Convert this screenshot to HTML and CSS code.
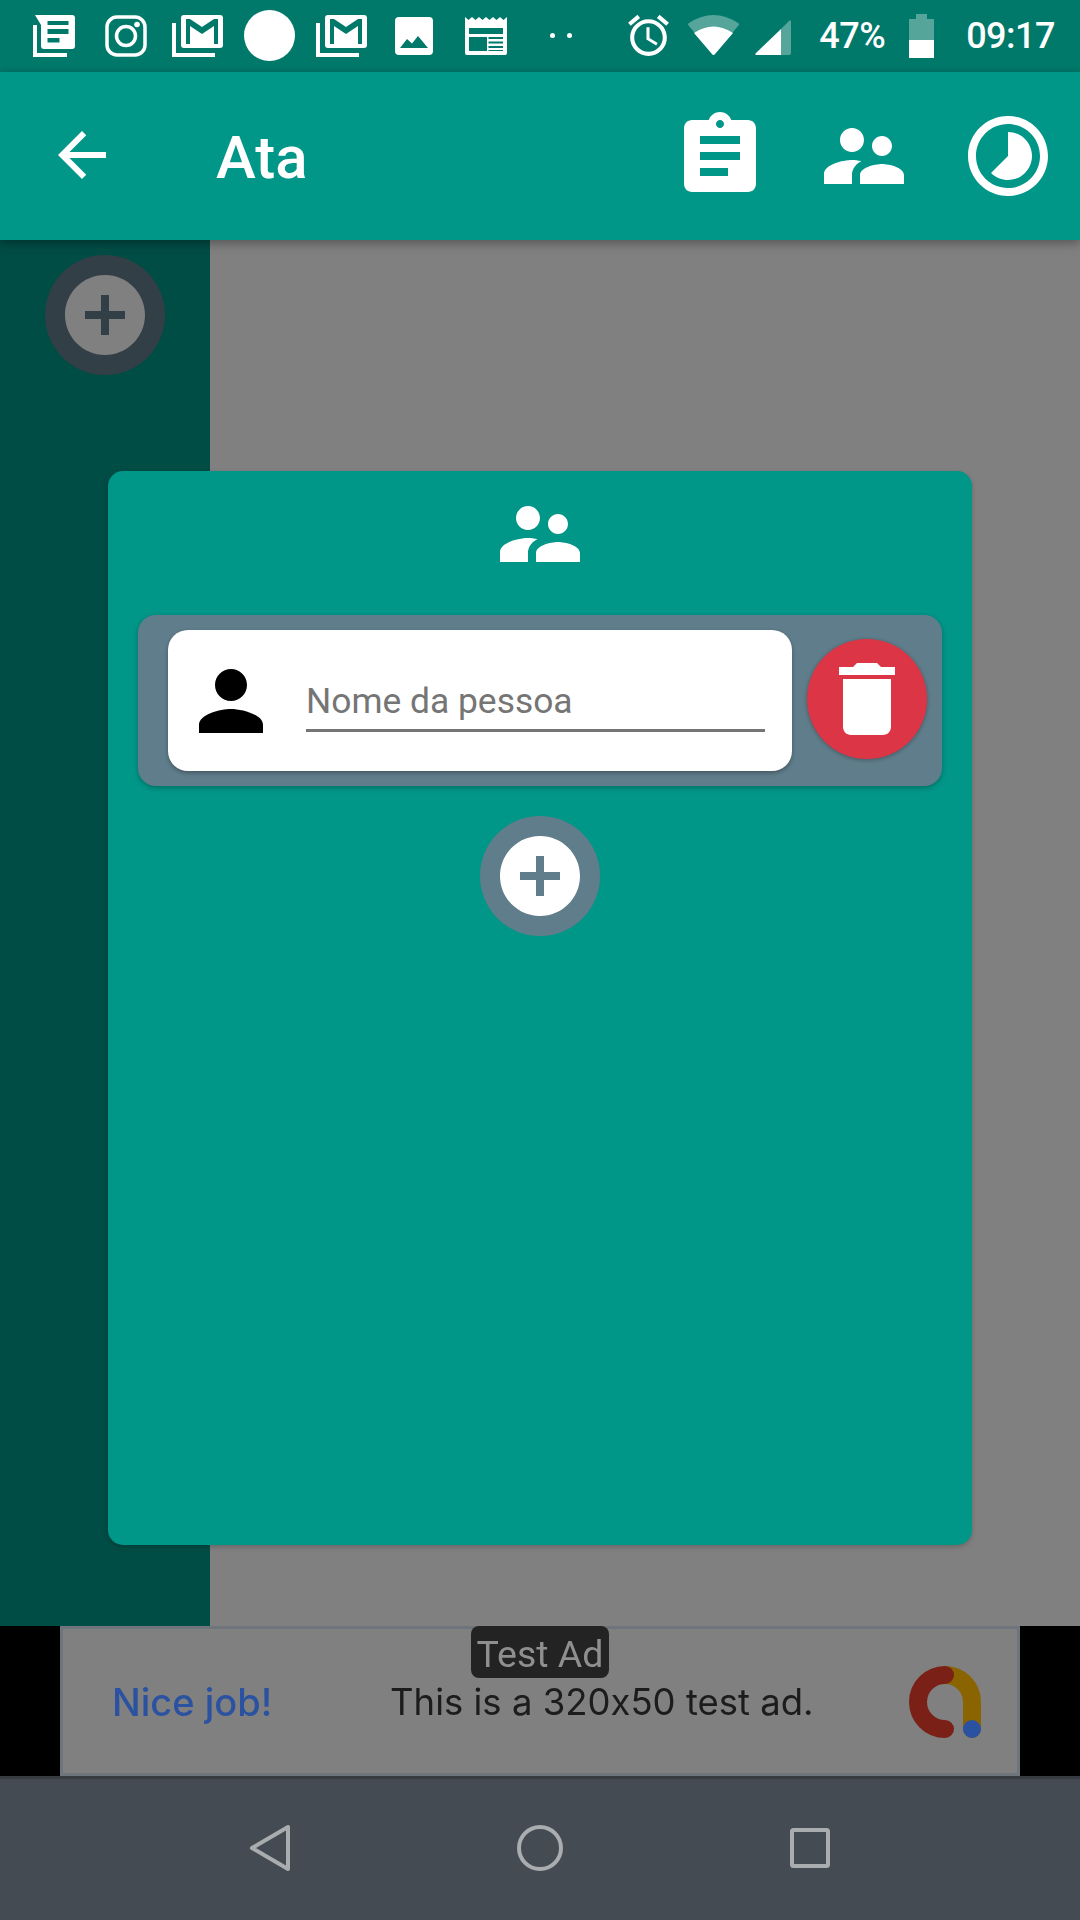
FILE: index.html
```html
<!DOCTYPE html>
<html lang="en">

<head>
    <meta charset="UTF-8">
    <meta name="viewport" content="width=device-width, initial-scale=1.0">
    <title>Ata</title>
    <link rel="stylesheet" href="styles.css">
</head>

<body>
    <div class="screen">
        <div class="status-bar">
            <div class="status-left">
                <!-- news -->
                <svg class="st-icon" viewBox="0 0 72 72">
                    <path fill="#fff" fill-rule="evenodd" d="M17 15H54a3 3 0 0 1 3 3V46a3 3 0 0 1-3 3H26a3 3 0 0 1-3-3V25ZM29.5 21v4h21v-4ZM29.5 29v5h21v-5ZM29.5 38v4.5h12V38Z" />
                    <path fill="none" stroke="#fff" stroke-width="4" d="M17 25V55H49" />
                </svg>
                <!-- instagram -->
                <svg class="st-icon" viewBox="0 0 72 72">
                    <rect x="17" y="17" width="38" height="38" rx="10" fill="none" stroke="#fff" stroke-width="3.5" />
                    <circle cx="36" cy="36" r="9.5" fill="none" stroke="#fff" stroke-width="3.5" />
                    <circle cx="47" cy="24.5" r="2.8" fill="#fff" />
                </svg>
                <!-- gmail -->
                <svg class="st-icon" viewBox="0 0 72 72">
                    <rect x="19" y="15" width="42" height="33" rx="3" fill="#fff" />
                    <path fill="#00796b" d="M24 19H28L40 27L52 19H56V44H52V26L40 34L28 26V44H24Z" />
                    <path fill="none" stroke="#fff" stroke-width="4" d="M12 23V55H53" />
                </svg>
                <svg class="st-icon" viewBox="0 0 72 72">
                    <circle cx="35.5" cy="35.5" r="25.5" fill="#fff" />
                </svg>
                <svg class="st-icon" viewBox="0 0 72 72">
                    <rect x="19" y="15" width="42" height="33" rx="3" fill="#fff" />
                    <path fill="#00796b" d="M24 19H28L40 27L52 19H56V44H52V26L40 34L28 26V44H24Z" />
                    <path fill="none" stroke="#fff" stroke-width="4" d="M12 23V55H53" />
                </svg>
                <!-- picture -->
                <svg class="st-icon" viewBox="0 0 72 72">
                    <rect x="17" y="17" width="38" height="38" rx="4" fill="#fff" />
                    <path fill="#00796b" d="M22 48L29 39L34 43.5L40 36L50 48Z" />
                </svg>
                <!-- newspaper -->
                <svg class="st-icon" viewBox="0 0 72 72">
                    <path fill="#fff" d="M15 17L18.5 20L22 17L25.500 20L29 17L32.500 20L36 17L39.500 20L43 17L46.500 20L50 17L53.500 20L57 17V53a2 2 0 0 1-2 2H17a2 2 0 0 1-2-2Z" />
                    <path fill="#00796b" d="M19 28H53V34H19ZM19 37H37V51H19ZM38.500 37H53V39H38.500ZM38.500 41.500H53V43.500H38.500ZM38.500 46H53V48H38.500ZM38.500 50H53V51H38.500Z" />
                </svg>
                <div class="st-dots"><span></span><span></span></div>
            </div>
            <div class="status-right">
                <svg class="st-alarm" viewBox="0 0 24 24">
                    <path fill="#fff" d="M22 5.720l-4.600-3.860-1.290 1.530 4.600 3.860L22 5.720zM7.880 3.390L6.600 1.860 2 5.710l1.290 1.530 4.590-3.850zM12.500 8H11v6l4.750 2.850.75-1.230-4-2.370V8zM12 4c-4.970 0-9 4.030-9 9s4.030 9 9 9 9-4.030 9-9-4.030-9-9-9zm0 16c-3.870 0-7-3.130-7-7s3.130-7 7-7 7 3.130 7 7-3.130 7-7 7z" />
                </svg>
                <svg class="st-wifi" viewBox="0 0 51 40">
                    <path fill="#55a59b" d="M1 11Q-1 9 1 8Q25.500-8 50 8Q52 9 50 11L27 39Q25.500 41 24 39Z" />
                    <path fill="#fff" d="M6 18Q25.500 5 45 18L27 39Q25.500 41 24 39Z" />
                </svg>
                <svg class="st-signal" viewBox="0 0 36 36">
                    <path fill="#55a59b" d="M26 10L34 2Q36 0 36 3V34Q36 36 34 36H26Z" />
                    <path fill="#fff" d="M26 10V36H2Q-1 36 1 34Z" />
                </svg>
                <span class="st-text st-percent">47%</span>
                <div class="st-battery">
                    <div class="battery-nub"></div>
                    <div class="battery-empty"></div>
                    <div class="battery-full"></div>
                </div>
                <span class="st-text st-time">09:17</span>
            </div>
        </div>

        <div class="app-bar">
            <svg class="back-icon" viewBox="0 0 24 24">
                <path fill="#fff" d="M20 11H7.830l5.590-5.590L12 4l-8 8 8 8 1.410-1.410L7.830 13H20v-2z" />
            </svg>
            <div class="app-title">Ata</div>
            <div class="app-actions">
                <svg class="icon-96" viewBox="0 0 24 24">
                    <path fill="#fff" d="M19 3h-4.180C14.400 1.840 13.300 1 12 1c-1.300 0-2.400.84-2.820 2H5c-1.100 0-2 .9-2 2v14c0 1.100.9 2 2 2h14c1.100 0 2-.9 2-2V5c0-1.100-.9-2-2-2zm-7 0c.55 0 1 .45 1 1s-.45 1-1 1-1-.45-1-1 .45-1 1-1zm2 14H7v-2h7v2zm3-4H7v-2h10v2zm0-4H7V7h10v2z" />
                </svg>
                <svg class="icon-96" viewBox="0 0 24 24">
                    <path fill="#fff" d="M16.500 12c1.380 0 2.490-1.120 2.490-2.500S17.880 7 16.500 7C15.120 7 14 8.120 14 9.500s1.120 2.500 2.500 2.500zM9 11c1.660 0 2.990-1.340 2.990-3S10.660 5 9 5C7.340 5 6 6.340 6 8s1.340 3 3 3zm7.500 3c-1.830 0-5.500.92-5.500 2.750V19h11v-2.250c0-1.830-3.670-2.750-5.500-2.750zM9 13c-2.330 0-7 1.170-7 3.500V19h7v-2.250c0-.85.33-2.340 2.370-3.470C10.500 13.100 9.660 13 9 13z" />
                </svg>
                <svg class="icon-96" viewBox="0 0 24 24">
                    <path fill="#fff" d="M16.240 7.760C15.070 6.590 13.540 6 12 6v6l-4.240 4.240c2.340 2.340 6.140 2.340 8.490 0 2.340-2.340 2.340-6.140-.01-8.480zM12 2C6.480 2 2 6.480 2 12s4.480 10 10 10 10-4.480 10-10S17.520 2 12 2zm0 18c-4.420 0-8-3.580-8-8s3.580-8 8-8 8 3.580 8 8-3.580 8-8 8z" />
                </svg>
            </div>
        </div>

        <div class="main">
            <div class="sidebar">
                <div class="add-btn add-btn-dim">
                    <svg class="icon-96" viewBox="0 0 24 24">
                        <path fill="#808080" d="M12 2C6.480 2 2 6.480 2 12s4.480 10 10 10 10-4.480 10-10S17.520 2 12 2zm5 11h-4v4h-2v-4H7v-2h4V7h2v4h4v2z" />
                    </svg>
                </div>
            </div>

            <div class="dialog">
                <svg class="icon-96" viewBox="0 0 24 24">
                    <path fill="#fff" d="M16.500 12c1.380 0 2.490-1.120 2.490-2.500S17.880 7 16.500 7C15.120 7 14 8.120 14 9.500s1.120 2.500 2.500 2.500zM9 11c1.660 0 2.990-1.340 2.990-3S10.660 5 9 5C7.340 5 6 6.340 6 8s1.340 3 3 3zm7.500 3c-1.830 0-5.500.92-5.500 2.750V19h11v-2.250c0-1.830-3.670-2.750-5.500-2.750zM9 13c-2.330 0-7 1.170-7 3.500V19h7v-2.250c0-.85.33-2.340 2.370-3.470C10.500 13.100 9.660 13 9 13z" />
                </svg>
                <div class="person-row">
                    <div class="person-field">
                        <svg class="icon-96" viewBox="0 0 24 24">
                            <path fill="#000" d="M12 12c2.210 0 4-1.790 4-4s-1.790-4-4-4-4 1.790-4 4 1.790 4 4 4zm0 2c-2.670 0-8 1.340-8 4v2h16v-2c0-2.660-5.330-4-8-4z" />
                        </svg>
                        <div class="person-input">Nome da pessoa</div>
                    </div>
                    <div class="delete-btn">
                        <svg class="icon-96" viewBox="0 0 24 24">
                            <path fill="#fff" d="M6 19c0 1.100.9 2 2 2h8c1.100 0 2-.9 2-2V7H6v12zM19 4h-3.500l-1-1h-5l-1 1H5v2h14V4z" />
                        </svg>
                    </div>
                </div>
                <div class="add-btn">
                    <svg class="icon-96" viewBox="0 0 24 24">
                        <path fill="#fff" d="M12 2C6.480 2 2 6.480 2 12s4.480 10 10 10 10-4.480 10-10S17.520 2 12 2zm5 11h-4v4h-2v-4H7v-2h4V7h2v4h4v2z" />
                    </svg>
                </div>
            </div>
        </div>

        <div class="ad-band">
            <div class="ad">
                <div class="ad-badge">Test Ad</div>
                <div class="ad-title">Nice job!</div>
                <div class="ad-text">This is a 320x50 test ad.</div>
                <svg class="ad-logo" viewBox="0 0 72 72">
                    <path fill="none" stroke="#8a6400" stroke-width="18" stroke-linecap="round" d="M36 9A27 27 0 0 1 63 36V63" />
                    <path fill="none" stroke="#7a2016" stroke-width="18" stroke-linecap="round" d="M36 9A27 27 0 0 0 36 63" />
                    <circle cx="63" cy="63" r="9" fill="#2a52a0" />
                </svg>
            </div>
        </div>

        <div class="nav-bar">
            <svg class="nav-icon" viewBox="0 0 48 48">
                <path fill="none" stroke="#a9adb0" stroke-width="4" stroke-linejoin="round" d="M6 24L42 3V45Z" />
            </svg>
            <svg class="nav-icon" viewBox="0 0 48 48">
                <circle cx="24" cy="24" r="21" fill="none" stroke="#a9adb0" stroke-width="4" />
            </svg>
            <svg class="nav-icon" viewBox="0 0 48 48">
                <rect x="6" y="6" width="36" height="36" rx="1.500" fill="none" stroke="#a9adb0" stroke-width="4" />
            </svg>
        </div>
    </div>
</body>

</html>
```

FILE: styles.css
```css
* {
    box-sizing: border-box;
}

html,
body {
    margin: 0;
    padding: 0;
}

body {
    font-family: Roboto, "Liberation Sans", sans-serif;
}

svg {
    display: block;
    flex: none;
}

.screen {
    display: flex;
    flex-direction: column;
    width: 1080px;
    height: 1920px;
    overflow: hidden;
    background: #808080;
}

/* status bar */

.status-bar {
    display: flex;
    justify-content: space-between;
    height: 72px;
    background: #00796b;
    color: #fff;
}

.status-left {
    display: flex;
    padding-left: 18px;
}

.st-icon {
    width: 72px;
    height: 72px;
}

.st-dots {
    display: flex;
    gap: 12px;
    margin: 33px 0 0 28px;
}

.st-dots span {
    width: 5px;
    height: 5px;
    border-radius: 50%;
    background: #fff;
}

.status-right {
    display: flex;
    align-items: flex-start;
    padding-right: 25px;
}

.st-alarm {
    width: 49px;
    height: 49px;
    margin-top: 11px;
}

.st-wifi {
    width: 51px;
    height: 40px;
    margin: 15px 0 0 15px;
}

.st-signal {
    width: 36px;
    height: 36px;
    margin: 19px 0 0 16px;
}

.st-text {
    font-size: 36px;
    font-weight: 500;
    line-height: 72px;
    letter-spacing: -0.5px;
}

.st-percent {
    margin-left: 28px;
}

.st-battery {
    width: 25px;
    margin: 14px 0 0 24px;
}

.battery-nub {
    width: 11px;
    height: 5px;
    margin: 0 auto;
    background: #55a59b;
}

.battery-empty {
    height: 21px;
    background: #55a59b;
}

.battery-full {
    height: 18px;
    background: #fff;
}

.st-time {
    margin-left: 32px;
}

/* app bar */

.app-bar {
    position: relative;
    z-index: 2;
    display: flex;
    align-items: center;
    height: 168px;
    padding-left: 46px;
    background: #009688;
    box-shadow: 0 3px 10px rgba(0, 0, 0, 0.35);
}

.back-icon {
    width: 72px;
    height: 72px;
    margin-top: -2px;
}

.app-title {
    margin: 2px 0 0 98px;
    font-size: 60px;
    font-weight: 500;
    color: #fff;
}

.app-actions {
    display: flex;
    gap: 48px;
    margin-left: auto;
    padding-right: 24px;
}

.icon-96 {
    width: 96px;
    height: 96px;
}

/* main area */

.main {
    position: relative;
    flex: 1;
    background: #808080;
}

.sidebar {
    width: 210px;
    height: 100%;
    padding: 15px 0 0 45px;
    background: #004d45;
}

.add-btn {
    display: flex;
    justify-content: center;
    align-items: center;
    width: 120px;
    height: 120px;
    border-radius: 50%;
    background: #607d8b;
}

.add-btn-dim {
    background: #323f47;
}

.dialog {
    position: absolute;
    top: 231px;
    left: 108px;
    display: flex;
    flex-direction: column;
    align-items: center;
    width: 864px;
    height: 1074px;
    padding: 15px 30px;
    border-radius: 15px;
    background: #009688;
    box-shadow: 0 2px 5px rgba(0, 0, 0, 0.2);
}

.person-row {
    display: flex;
    align-items: center;
    gap: 15px;
    width: 100%;
    margin: 33px 0 30px;
    padding: 15px 15px 15px 30px;
    border-radius: 18px;
    background: #607d8b;
    box-shadow: 0 2px 5px rgba(0, 0, 0, 0.25);
}

.person-field {
    display: flex;
    align-items: center;
    flex: 1;
    height: 141px;
    padding-left: 15px;
    border-radius: 20px;
    background: #fff;
    box-shadow: 0 2px 4px rgba(0, 0, 0, 0.3);
}

.person-input {
    width: 459px;
    height: 60px;
    margin: 3px 0 0 27px;
    border-bottom: 3px solid #757575;
    font-size: 35.4px;
    line-height: 58px;
    color: #757575;
}

.delete-btn {
    display: flex;
    justify-content: center;
    align-items: center;
    width: 120px;
    height: 120px;
    margin-bottom: 3px;
    border-radius: 50%;
    background: #dc3545;
    box-shadow: 0 1px 4px rgba(0, 0, 0, 0.3);
}

/* ad */

.ad-band {
    height: 150px;
    padding: 0 60px;
    background: #000;
}

.ad {
    position: relative;
    display: flex;
    align-items: center;
    height: 100%;
    padding: 0 36px 0 49px;
    border: 3px solid #6e757c;
    background: #808080;
    filter: blur(0.4px);
}

.ad-badge {
    position: absolute;
    top: -3px;
    left: 408px;
    width: 138px;
    height: 52px;
    border-radius: 8px;
    background: #232323;
    font-size: 37.5px;
    line-height: 56px;
    text-align: center;
    color: #8f8f8f;
}

.ad-title {
    width: 278px;
    margin-top: 2px;
    font-family: Inter, Roboto, sans-serif;
    font-feature-settings: "calt" 0;
    font-size: 38px;
    font-weight: 500;
    color: #2a52a0;
}

.ad-text {
    margin-top: 2px;
    font-family: Inter, Roboto, sans-serif;
    font-feature-settings: "calt" 0;
    font-size: 36.5px;
    color: #1c1c1c;
}

.ad-logo {
    width: 72px;
    height: 72px;
    margin-left: auto;
    margin-top: 2px;
}

/* navigation */

.nav-bar {
    display: flex;
    justify-content: center;
    align-items: center;
    gap: 222px;
    height: 144px;
    padding-bottom: 3px;
    border-top: 3px solid #363c3f;
    background: #454b52;
}

.nav-icon {
    width: 48px;
    height: 48px;
    filter: blur(0.4px);
}
```
